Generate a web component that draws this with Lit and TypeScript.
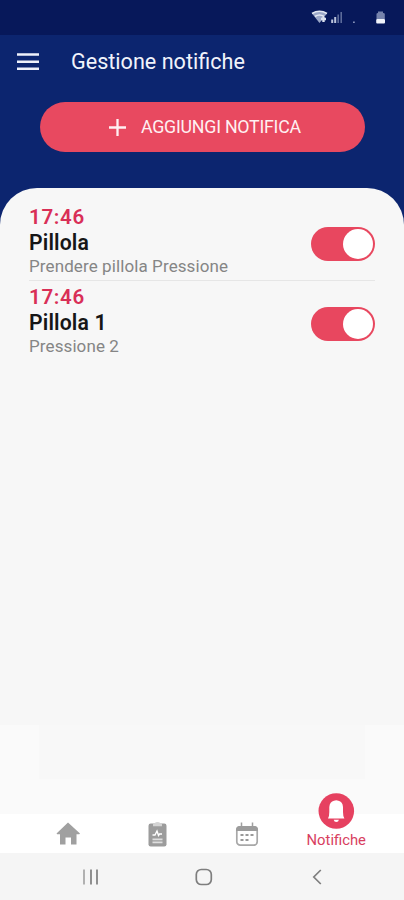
import { LitElement, html, css, svg } from "lit";
import { customElement, property } from "lit/decorators.js";

@customElement("notification-row")
class NotificationRow extends LitElement {
  @property() time = "";
  @property() name = "";
  @property() note = "";

  static styles = css`
    :host { display: flex; align-items: center; justify-content: space-between; height: 79.5px; box-sizing: border-box; }
    .time { color: #d92f57; font-size: 20.5px; line-height: 26px; font-weight: 600; letter-spacing: 0.7px; }
    .name { color: #161616; font-size: 21.2px; line-height: 26px; font-weight: 600; letter-spacing: 0.15px; }
    .note { color: #858585; font-size: 17px; line-height: 20px; letter-spacing: 0.1px; }
    .text { display: flex; flex-direction: column; white-space: nowrap; margin-top: -1px; }
    .toggle { width: 64px; height: 34px; border-radius: 17px; background: #e8475f; display: flex; align-items: center; justify-content: flex-end; padding-right: 2px; box-sizing: border-box; margin-top: 6px; }
    .knob { width: 30px; height: 30px; border-radius: 50%; background: #fff; }
  `;

  render() {
    return html`
      <div class="text">
        <div class="time">${this.time}</div>
        <div class="name">${this.name}</div>
        <div class="note">${this.note}</div>
      </div>
      <div class="toggle"><div class="knob"></div></div>
    `;
  }
}

const home = svg`<path fill="#a0a0a0" d="M12 0.5L24 11.5L23.3 12.3H20.5V22.5H15V15.5H9.5V22.5H4V12.3H1.2L0.5 11.5Z" />`;
const clipboard = svg`
  <rect x="3.5" y="1.5" width="18" height="23" rx="2.2" fill="#9c9c9c" />
  <path d="M8 4.2V2.2Q8 1.4 9.5 1.4Q10.5 0 12.5 0T15.5 1.4Q17 1.4 17 2.2V4.2Z" fill="#d4d4d4" />
  <path d="M7.5 13H10L12 9L13.5 13.5L14.5 12H17" fill="none" stroke="#fff" stroke-width="1.4" />
  <path d="M7.5 17.3H17.5M7.5 20.4H17.5" stroke="#dedede" stroke-width="1.8" />`;
const calendar = svg`
  <rect x="1.8" y="4.8" width="20.4" height="18.4" rx="3.5" fill="#fff" stroke="#a8a8a8" stroke-width="1.7" />
  <path d="M1 9V7.5Q1 4 4.5 4H19.5Q23 4 23 7.5V9Z" fill="#9c9c9c" />
  <path d="M6.5 0.5V4M17.5 0.5V4" stroke="#a0a0a0" stroke-width="1.5" />
  <path d="M5.5 13H8.5M10.5 13H13.5M15.5 13H18.5M5.5 18H8.5M10.5 18H13.5" stroke="#999" stroke-width="2.1" />`;

@customElement("app-root")
class AppRoot extends LitElement {
  static styles = css`
    :host { display: flex; flex-direction: column; width: 404px; height: 900px; overflow: hidden; background: #0c256f; font-family: Roboto, "Liberation Sans", sans-serif; }
    svg { display: block; overflow: visible; flex: none; }
    .status { height: 35px; flex: none; background: #07185a; display: flex; justify-content: flex-end; }
    .header { height: 54px; flex: none; display: flex; align-items: center; padding-left: 17px; gap: 32px; }
    .title { color: #f1f3fb; font-size: 21.6px; line-height: 28px; white-space: nowrap; }
    .action { margin: 13px 39px 0 40px; height: 50px; flex: none; border-radius: 25px; background: #e84960; display: flex; align-items: center; padding-left: 69px; gap: 15px; box-sizing: border-box; color: #fff0f2; font-size: 17.8px; letter-spacing: -0.25px; white-space: nowrap; }
    .action span { padding-bottom: 2px; }
    .panel { margin-top: 35.5px; flex: 1; min-height: 0; display: flex; flex-direction: column; background: #f7f7f7; border-radius: 37px 37px 0 0; }
    .list { padding: 14px 29px 0; display: flex; flex-direction: column; flex: 1; }
    .line { border-bottom: 1px solid #e6e6e6; }
    .fade { height: 89px; background: #fafafa; display: flex; justify-content: center; align-items: flex-start; flex: none; }
    .shade { width: 326px; height: 54px; background: #f8f8f8; }
    .nav { height: 39px; flex: none; background: #fff; display: grid; grid-template-columns: 89.5px 89.5px 89.5px 89.5px; justify-content: center; justify-items: center; }
    .tab { padding-top: 8px; }
    .active { display: flex; flex-direction: column; align-items: center; margin-top: -21px; color: #d83e60; font-size: 14.8px; line-height: 18px; white-space: nowrap; gap: 2px; }
    .system { height: 47px; flex: none; background: #f5f5f5; }
  `;

  render() {
    return html`
      <div class="status">
        <svg width="114" height="35" viewBox="0 0 114 35">
          <path d="M22 13.5Q29.5 8.5 37 13.5L29.5 23Z" fill="#9ba7c7" />
          <path d="M22 13.5Q29.5 9 37 13.5M25 16.5Q29.5 13.5 34 16.5" fill="none" stroke="#e3e8f2" stroke-width="1.6" />
          <path d="M31 19H36M33.5 17V22" stroke="#dce2ef" stroke-width="2.4" />
          <path d="M42.2 19.5V23M45.2 17V23" stroke="#bcc5dc" stroke-width="2" />
          <path d="M48.2 14.5V23M51.2 12V23" stroke="#5c6b9a" stroke-width="1.6" />
          <rect x="63" y="21.5" width="1.8" height="1.5" fill="#8490b8" />
          <path d="M86.5 14Q86.5 13 88 13V11.5H93V13Q94.8 13 94.8 14V19H86.5Z" fill="#7683ac" />
          <rect x="86.2" y="19" width="8.8" height="4.5" rx="1" fill="#f0f3fb" />
        </svg>
      </div>
      <div class="header">
        <svg width="22" height="18" viewBox="0 0 22 18"><path d="M0 1.5H22M0 8.8H22M0 15.8H22" stroke="#eef1fb" stroke-width="2.5" /></svg>
        <div class="title">Gestione notifiche</div>
      </div>
      <div class="action">
        <svg width="17" height="17" viewBox="0 0 17 17"><path d="M0 8.5H17M8.5 0V17" stroke="#fff0f2" stroke-width="2.3" /></svg>
        <span>AGGIUNGI NOTIFICA</span>
      </div>
      <div class="panel">
        <div class="list">
          <notification-row class="line" time="17:46" name="Pillola" note="Prendere pillola Pressione"></notification-row>
          <notification-row time="17:46" name="Pillola 1" note="Pressione 2"></notification-row>
        </div>
        <div class="fade"><div class="shade"></div></div>
        <div class="nav">
          <div class="tab"><svg width="24" height="24" viewBox="0 0 24 24">${home}</svg></div>
          <div class="tab"><svg width="24" height="25" viewBox="0 0 24 25">${clipboard}</svg></div>
          <div class="tab"><svg width="24" height="24" viewBox="0 0 24 24">${calendar}</svg></div>
          <div class="active">
            <svg width="36" height="36" viewBox="0 0 36 36">
              <circle cx="18.3" cy="18" r="17.8" fill="#e64160" />
              <path d="M10 25.5Q11.3 23.5 11.3 19V14Q11.8 8.8 16 7.8Q18.2 6.8 20.4 7.8Q24.6 8.8 25 14V19Q25 23.5 26.4 25.5Z" fill="#fff" />
              <path d="M15.7 26.8H20.9Q20.5 29 18.3 29T15.7 26.8Z" fill="#fff" />
            </svg>
            <span>Notifiche</span>
          </div>
        </div>
        <div class="system">
          <svg width="404" height="47" viewBox="0 0 404 47" fill="none">
            <path d="M84 16.5V31.5" stroke="#aaa" stroke-width="1.8" />
            <path d="M91 16.5V31.5M97 16.5V31.5" stroke="#858585" stroke-width="1.8" />
            <rect x="196.3" y="16.5" width="15" height="15" rx="5" stroke="#7e7e7e" stroke-width="1.7" />
            <path d="M320.8 17L313.8 24L320.8 31" stroke="#7e7e7e" stroke-width="1.7" />
          </svg>
        </div>
      </div>
    `;
  }
}
